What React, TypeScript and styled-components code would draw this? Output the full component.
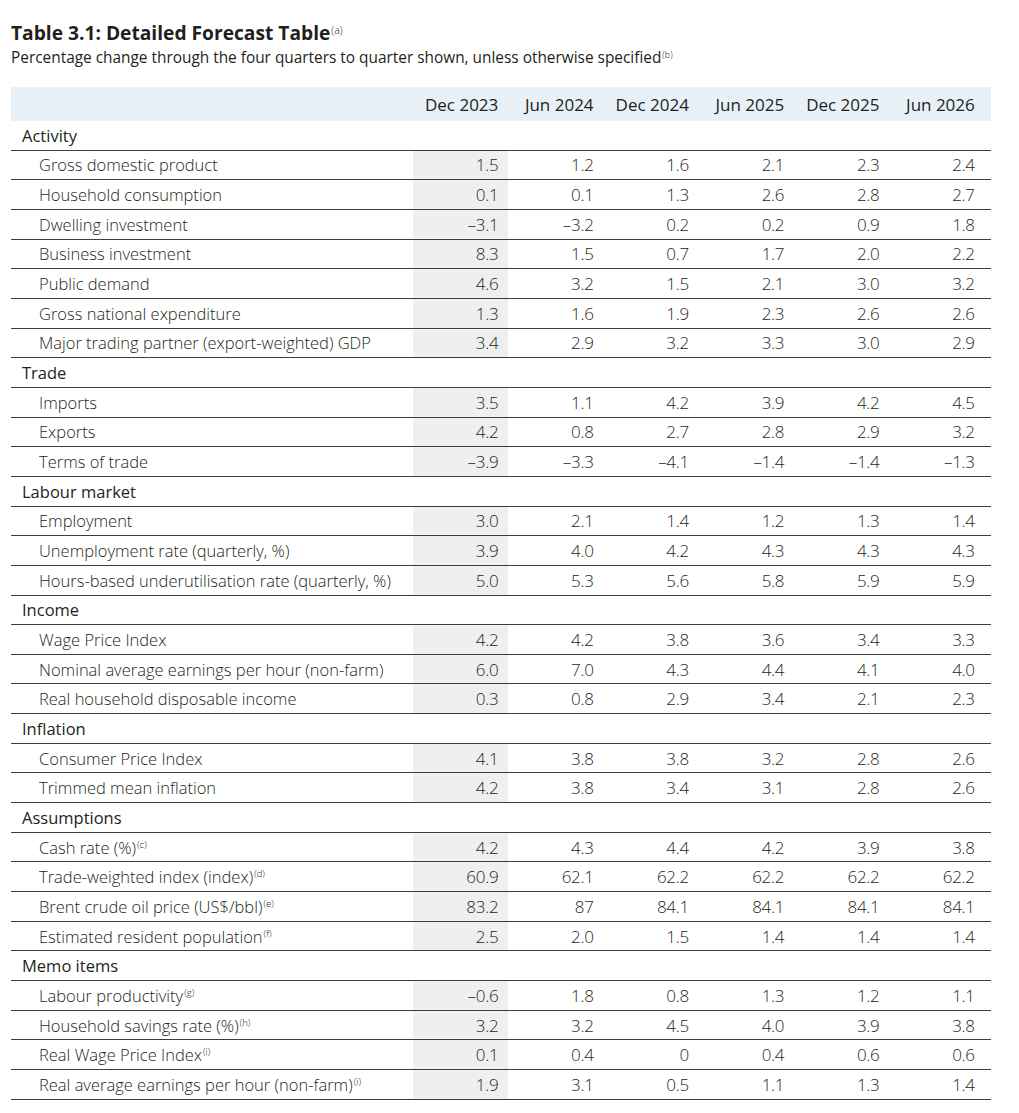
import React from "react";
import styled, { createGlobalStyle } from "styled-components";

const GlobalStyle = createGlobalStyle`
  html, body { margin: 0; padding: 0; background: #ffffff; }
  body { font-family: "Open Sans", "Noto Sans", sans-serif; color: #231f20; }
`;

const Page = styled.div`
  padding: 20px 0 0 11px;
  width: 980px;
`;

const Title = styled.h1`
  margin: 0;
  font-size: 19.2px;
  font-weight: 700;
  letter-spacing: 0;
  line-height: 26px;
  color: #231f20;
`;

const Subtitle = styled.p`
  margin: 0;
  font-size: 15.4px;
  font-weight: 400;
  letter-spacing: 0;
  line-height: 24px;
  color: #231f20;
`;

const Sup = styled.sup<{ $size?: number }>`
  font-size: ${(p) => p.$size ?? 9.5}px;
  font-weight: 300;
  vertical-align: top;
  position: relative;
  top: -3px;
  margin-left: 1px;
  letter-spacing: 0;
`;

const Table = styled.div`
  margin-top: 17px;
  display: flex;
  flex-direction: column;
`;

const Row = styled.div<{ $kind: "head" | "section" | "data" }>`
  display: grid;
  grid-template-columns: 402px repeat(6, 95.3px);
  height: ${(p) => (p.$kind === "head" ? "34px" : "29.67px")};
  box-sizing: border-box;
  background: ${(p) => (p.$kind === "head" ? "#e8f0f8" : "transparent")};
  border-bottom: ${(p) => (p.$kind === "head" ? "none" : "1px solid #3d3d3d")};
`;

const Label = styled.div<{ $section?: boolean }>`
  display: flex;
  align-items: center;
  padding-left: ${(p) => (p.$section ? "11px" : "28px")};
  font-size: 16.5px;
  font-weight: ${(p) => (p.$section ? 400 : 300)};
  letter-spacing: 0;
  white-space: nowrap;
`;

const Cell = styled.div<{ $shade?: boolean; $head?: boolean }>`
  display: flex;
  align-items: center;
  justify-content: flex-end;
  padding-right: 10px;
  background: ${(p) => (p.$shade ? "#efefef" : "transparent")};
  font-size: 17px;
  font-weight: ${(p) => (p.$head ? 400 : 300)};
  letter-spacing: ${(p) => (p.$head ? "0" : "-0.3px")};
  white-space: nowrap;
`;

type Item = { label: string; note?: string; values: string[] };
type Section = { title: string; items: Item[] };

const columns = ["Dec 2023", "Jun 2024", "Dec 2024", "Jun 2025", "Dec 2025", "Jun 2026"];

const sections: Section[] = [
  {
    title: "Activity",
    items: [
      { label: "Gross domestic product", values: ["1.5", "1.2", "1.6", "2.1", "2.3", "2.4"] },
      { label: "Household consumption", values: ["0.1", "0.1", "1.3", "2.6", "2.8", "2.7"] },
      { label: "Dwelling investment", values: ["–3.1", "–3.2", "0.2", "0.2", "0.9", "1.8"] },
      { label: "Business investment", values: ["8.3", "1.5", "0.7", "1.7", "2.0", "2.2"] },
      { label: "Public demand", values: ["4.6", "3.2", "1.5", "2.1", "3.0", "3.2"] },
      { label: "Gross national expenditure", values: ["1.3", "1.6", "1.9", "2.3", "2.6", "2.6"] },
      { label: "Major trading partner (export-weighted) GDP", values: ["3.4", "2.9", "3.2", "3.3", "3.0", "2.9"] },
    ],
  },
  {
    title: "Trade",
    items: [
      { label: "Imports", values: ["3.5", "1.1", "4.2", "3.9", "4.2", "4.5"] },
      { label: "Exports", values: ["4.2", "0.8", "2.7", "2.8", "2.9", "3.2"] },
      { label: "Terms of trade", values: ["–3.9", "–3.3", "–4.1", "–1.4", "–1.4", "–1.3"] },
    ],
  },
  {
    title: "Labour market",
    items: [
      { label: "Employment", values: ["3.0", "2.1", "1.4", "1.2", "1.3", "1.4"] },
      { label: "Unemployment rate (quarterly, %)", values: ["3.9", "4.0", "4.2", "4.3", "4.3", "4.3"] },
      { label: "Hours-based underutilisation rate (quarterly, %)", values: ["5.0", "5.3", "5.6", "5.8", "5.9", "5.9"] },
    ],
  },
  {
    title: "Income",
    items: [
      { label: "Wage Price Index", values: ["4.2", "4.2", "3.8", "3.6", "3.4", "3.3"] },
      { label: "Nominal average earnings per hour (non-farm)", values: ["6.0", "7.0", "4.3", "4.4", "4.1", "4.0"] },
      { label: "Real household disposable income", values: ["0.3", "0.8", "2.9", "3.4", "2.1", "2.3"] },
    ],
  },
  {
    title: "Inflation",
    items: [
      { label: "Consumer Price Index", values: ["4.1", "3.8", "3.8", "3.2", "2.8", "2.6"] },
      { label: "Trimmed mean inflation", values: ["4.2", "3.8", "3.4", "3.1", "2.8", "2.6"] },
    ],
  },
  {
    title: "Assumptions",
    items: [
      { label: "Cash rate (%)", note: "(c)", values: ["4.2", "4.3", "4.4", "4.2", "3.9", "3.8"] },
      { label: "Trade-weighted index (index)", note: "(d)", values: ["60.9", "62.1", "62.2", "62.2", "62.2", "62.2"] },
      { label: "Brent crude oil price (US$/bbl)", note: "(e)", values: ["83.2", "87", "84.1", "84.1", "84.1", "84.1"] },
      { label: "Estimated resident population", note: "(f)", values: ["2.5", "2.0", "1.5", "1.4", "1.4", "1.4"] },
    ],
  },
  {
    title: "Memo items",
    items: [
      { label: "Labour productivity", note: "(g)", values: ["–0.6", "1.8", "0.8", "1.3", "1.2", "1.1"] },
      { label: "Household savings rate (%)", note: "(h)", values: ["3.2", "3.2", "4.5", "4.0", "3.9", "3.8"] },
      { label: "Real Wage Price Index", note: "(i)", values: ["0.1", "0.4", "0", "0.4", "0.6", "0.6"] },
      { label: "Real average earnings per hour (non-farm)", note: "(i)", values: ["1.9", "3.1", "0.5", "1.1", "1.3", "1.4"] },
    ],
  },
];

export default function App() {
  return (
    <>
      <GlobalStyle />
      <Page>
        <Title>
          Table 3.1: Detailed Forecast Table<Sup $size={10.5}>(a)</Sup>
        </Title>
        <Subtitle>
          Percentage change through the four quarters to quarter shown, unless otherwise specified
          <Sup $size={9}>(b)</Sup>
        </Subtitle>
        <Table>
          <Row $kind="head">
            <Label />
            {columns.map((c) => (
              <Cell key={c} $head>
                {c}
              </Cell>
            ))}
          </Row>
          {sections.map((s) => (
            <React.Fragment key={s.title}>
              <Row $kind="section">
                <Label $section>{s.title}</Label>
                {columns.map((c) => (
                  <Cell key={c} />
                ))}
              </Row>
              {s.items.map((it) => (
                <Row $kind="data" key={it.label}>
                  <Label>
                    {it.label}
                    {it.note && <Sup>{it.note}</Sup>}
                  </Label>
                  {it.values.map((v, i) => (
                    <Cell key={i} $shade={i === 0}>
                      {v}
                    </Cell>
                  ))}
                </Row>
              ))}
            </React.Fragment>
          ))}
        </Table>
      </Page>
    </>
  );
}
